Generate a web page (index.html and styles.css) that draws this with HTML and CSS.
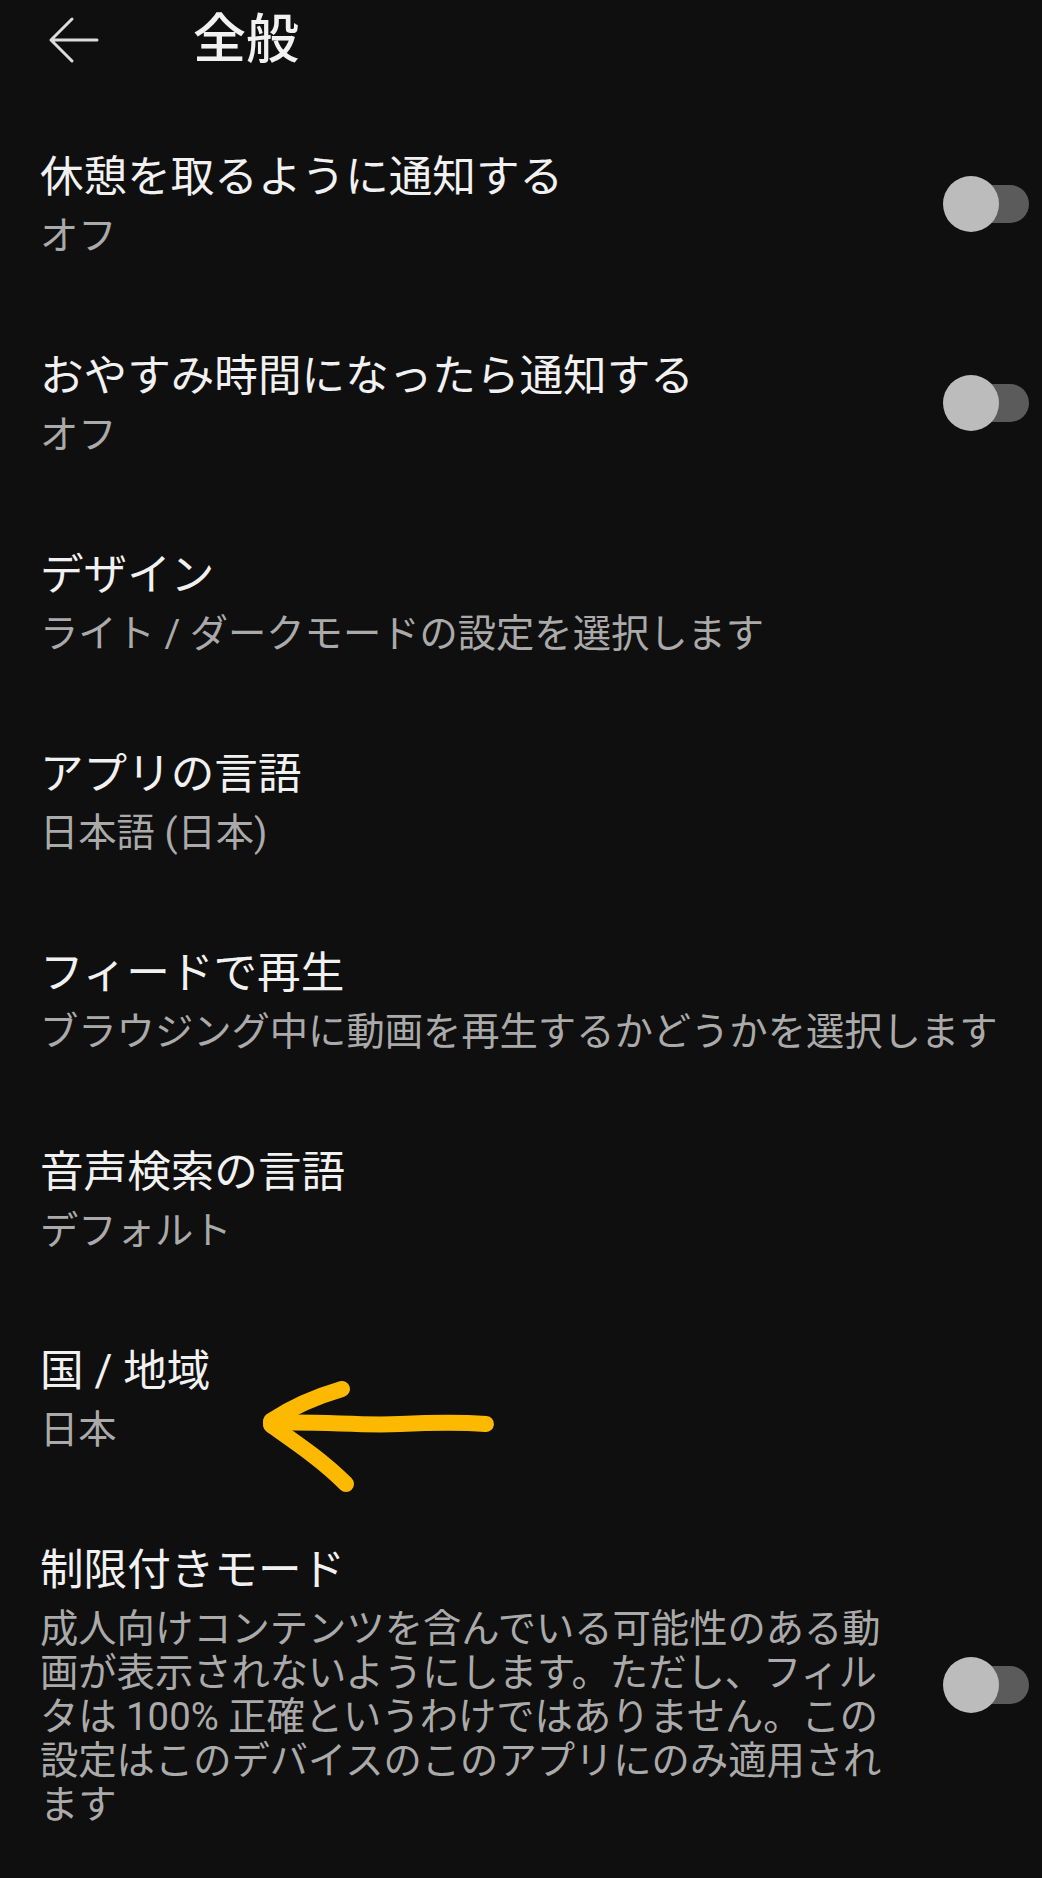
FILE: index.html
```html
<!DOCTYPE html>
<html lang="ja">
  <head>
    <meta charset="UTF-8" />
    <meta name="viewport" content="width=device-width, initial-scale=1.0" />
    <title>全般</title>
    <link rel="stylesheet" href="styles.css">
  </head>
  <body>
    <div class="page">
      <header class="toolbar">
        <svg class="back" width="52" height="48" viewBox="0 0 52 48">
          <path d="M49 24 H3 M24 3 L3 24 L24 45" />
        </svg>
        <h1>全般</h1>
      </header>

      <div class="settings">
        <div class="item">
          <div class="text">
            <div class="title">休憩を取るように通知する</div>
            <div class="sub">オフ</div>
          </div>
          <div class="switch"><span class="track"></span><span class="knob"></span></div>
        </div>

        <div class="item">
          <div class="text">
            <div class="title">おやすみ時間になったら通知する</div>
            <div class="sub">オフ</div>
          </div>
          <div class="switch"><span class="track"></span><span class="knob"></span></div>
        </div>

        <div class="item">
          <div class="text">
            <div class="title">デザイン</div>
            <div class="sub">ライト / ダークモードの設定を選択します</div>
          </div>
        </div>

        <div class="item">
          <div class="text">
            <div class="title">アプリの言語</div>
            <div class="sub">日本語 (日本)</div>
          </div>
        </div>

        <div class="item">
          <div class="text">
            <div class="title">フィードで再生</div>
            <div class="sub">ブラウジング中に動画を再生するかどうかを選択します</div>
          </div>
        </div>

        <div class="item">
          <div class="text">
            <div class="title">音声検索の言語</div>
            <div class="sub">デフォルト</div>
          </div>
        </div>

        <div class="item">
          <div class="text">
            <div class="title">国 / 地域</div>
            <div class="sub">日本</div>
          </div>
        </div>

        <div class="item">
          <div class="text">
            <div class="title">制限付きモード</div>
            <div class="sub">成人向けコンテンツを含んでいる可能性のある動画が表示されないようにします。ただし、フィルタは 100% 正確というわけではありません。この設定はこのデバイスのこのアプリにのみ適用されます</div>
          </div>
          <div class="switch"><span class="track"></span><span class="knob"></span></div>
        </div>
      </div>

      <!-- hand drawn marker over the list -->
      <svg class="marker" width="1042" height="1878" viewBox="0 0 1042 1878">
        <path d="M271 1423 C 320 1421, 360 1426, 400 1424 S 460 1422, 486 1424" />
        <path d="M342 1389 C 318 1396, 295 1405, 271 1421" />
        <path d="M271 1425 C 295 1442, 322 1460, 346 1484" />
      </svg>
    </div>
  </body>
</html>
```

FILE: styles.css
```css
body {
  margin: 0;
  background: #0f0f0f;
  font-family: Roboto, "Noto Sans CJK JP", sans-serif;
}

.page {
  position: relative;
  width: 1042px;
  height: 1878px;
  overflow: hidden;
  background: #0f0f0f;
}

.toolbar {
  display: flex;
  align-items: center;
  height: 80px;
  padding-left: 48px;
}

.back {
  fill: none;
  stroke: #dcdcdc;
  stroke-width: 3;
  stroke-linecap: round;
  stroke-linejoin: round;
}

.toolbar h1 {
  margin: 0 0 0 93px;
  font-size: 53px;
  font-weight: 500;
  line-height: 60px;
  color: #f1f1f1;
}

.settings {
  padding-top: 23px;
}

.item {
  display: flex;
  align-items: center;
  padding: 47px 13px 44px 40px;
}

.text {
  flex: 1;
  min-width: 0;
}

.title {
  font-size: 43.6px;
  line-height: 56px;
  color: #f1f1f1;
}

.sub {
  margin-top: 8px;
  font-size: 38.3px;
  line-height: 44px;
  color: #aaaaaa;
}

.switch {
  position: relative;
  flex: none;
  width: 86px;
  height: 56px;
  margin-left: 40px;
}

.track {
  position: absolute;
  right: 0;
  top: 9px;
  width: 70px;
  height: 38px;
  border-radius: 19px;
  background: #5b5b5b;
}

.knob {
  position: absolute;
  left: 0;
  top: 0;
  width: 56px;
  height: 56px;
  border-radius: 50%;
  background: #bcbcbc;
}

.marker {
  position: absolute;
  left: 0;
  top: 0;
  pointer-events: none;
  fill: none;
  stroke: #fdb900;
  stroke-width: 16;
  stroke-linecap: round;
  stroke-linejoin: round;
}
```
